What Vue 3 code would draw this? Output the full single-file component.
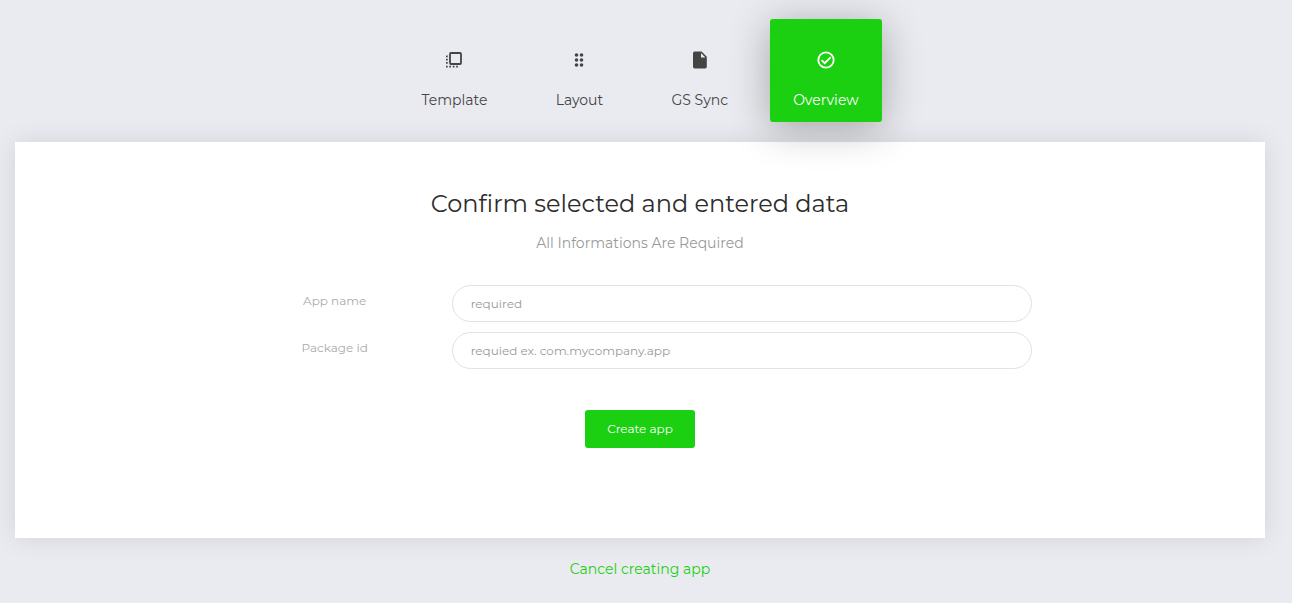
<script setup>
import { ref } from 'vue'

const steps = [
  { id: 'template', label: 'Template' },
  { id: 'layout', label: 'Layout' },
  { id: 'sync', label: 'GS Sync' },
  { id: 'overview', label: 'Overview' },
]
const active = ref('overview')
const appName = ref('')
const packageId = ref('')
</script>

<template>
  <main class="page">
    <nav class="steps" aria-label="Steps">
      <button
        v-for="step in steps"
        :key="step.id"
        type="button"
        class="step"
        :class="{ active: step.id === active }"
        @click="active = step.id"
      >
        <svg class="icon" viewBox="0 0 20 20" aria-hidden="true">
          <g v-if="step.id === 'template'">
            <rect x="6" y="3" width="11" height="11" rx="1" fill="none" stroke="currentColor" stroke-width="1.8" />
            <path
              d="M2 5.5h1.7v1.7H2zM2 8.7h1.7v1.7H2zM2 12h1.7v1.7H2zM2 15.7h1.7v1.7H2zM5.3 15.7h1.7v1.7H5.3zM8.8 15.7h1.7v1.7H8.8zM12.2 15.7h1.7v1.7h-1.7z"
              fill="currentColor"
            />
          </g>
          <g v-else-if="step.id === 'layout'" fill="currentColor">
            <circle cx="7.5" cy="5" r="1.8" />
            <circle cx="12.5" cy="5" r="1.8" />
            <circle cx="7.5" cy="10" r="1.8" />
            <circle cx="12.5" cy="10" r="1.8" />
            <circle cx="7.5" cy="15" r="1.8" />
            <circle cx="12.5" cy="15" r="1.8" />
          </g>
          <path
            v-else-if="step.id === 'sync'"
            d="M4.6 1.6h7l5.2 5.2v10a1.6 1.6 0 0 1-1.6 1.6H4.6A1.6 1.6 0 0 1 3 16.8V3.2A1.6 1.6 0 0 1 4.6 1.6zM11 3v4.4h4.4z"
            fill="currentColor"
            fill-rule="evenodd"
          />
          <g v-else fill="none" stroke="currentColor" stroke-width="1.8">
            <circle cx="10" cy="10" r="7.7" />
            <path d="M5.6 10.1l3.1 3.1 6-6" />
          </g>
        </svg>
        <span>{{ step.label }}</span>
      </button>
    </nav>

    <section class="card">
      <h1>Confirm selected and entered data</h1>
      <p class="subtitle">All Informations Are Required</p>
      <form @submit.prevent>
        <div class="field">
          <label for="app-name">App name</label>
          <input id="app-name" v-model="appName" type="text" placeholder="required" />
        </div>
        <div class="field">
          <label for="package-id">Package id</label>
          <input id="package-id" v-model="packageId" type="text" placeholder="requied ex. com.mycompany.app" />
        </div>
        <button type="submit" class="create">Create app</button>
      </form>
    </section>

    <a href="#" class="cancel">Cancel creating app</a>
  </main>
</template>

<style>
body {
  background: #eaebf0;
}
</style>

<style scoped>
.page {
  box-sizing: border-box;
  min-height: 100vh;
  padding: 19px 27px 20px 15px;
  display: flex;
  flex-direction: column;
  align-items: center;
  color: #444;
  font-family: Montserrat, Inter, sans-serif;
}

.steps {
  display: flex;
  gap: 19px;
  position: relative;
  z-index: 1;
}

.step {
  box-sizing: border-box;
  min-width: 100px;
  height: 103px;
  padding: 19px 23px 0;
  border: 0;
  border-radius: 3px;
  background: transparent;
  color: #444;
  display: flex;
  flex-direction: column;
  align-items: center;
  justify-content: center;
  gap: 20px;
  font: 400 14px/20px Montserrat, Inter, sans-serif;
}

.step.active {
  background: #1bcf11;
  color: #fff;
  box-shadow: 0 6px 40px rgba(0, 0, 0, 0.3);
}

.icon {
  width: 20px;
  height: 20px;
}

.card {
  box-sizing: border-box;
  width: 100%;
  margin-top: 20px;
  padding: 44px 12px 90px;
  background: #fff;
  box-shadow: 0 0 24px rgba(0, 0, 0, 0.1);
  text-align: center;
}

h1 {
  margin: 0;
  color: #2c2c2c;
  font-size: 24px;
  font-weight: 400;
  line-height: 36px;
}

.subtitle {
  margin: 11px 0 32px;
  color: #999;
  font-size: 14px;
  line-height: 20px;
}

.field {
  width: 64%;
  margin: 0 auto 10px;
  display: grid;
  grid-template-columns: 26fr 74fr;
}

label {
  padding: 6px 30px 0 0;
  color: #aaa;
  font-size: 12px;
  line-height: 20px;
}

input {
  box-sizing: border-box;
  width: 100%;
  height: 37px;
  padding: 0 18px;
  border: 1px solid #e2e2e2;
  border-radius: 19px;
  background: #fff;
  color: #444;
  font: 400 12px/20px Montserrat, Inter, sans-serif;
}

input::placeholder {
  color: #999;
  opacity: 1;
}

.create {
  margin-top: 31px;
  height: 38px;
  padding: 0 22px;
  border: 0;
  border-radius: 3px;
  background: #1bcf11;
  color: #fff;
  font: 400 12px/20px Montserrat, Inter, sans-serif;
}

.cancel {
  margin-top: 21px;
  color: #1bcf11;
  font-size: 14px;
  line-height: 20px;
  text-decoration: none;
}
</style>
